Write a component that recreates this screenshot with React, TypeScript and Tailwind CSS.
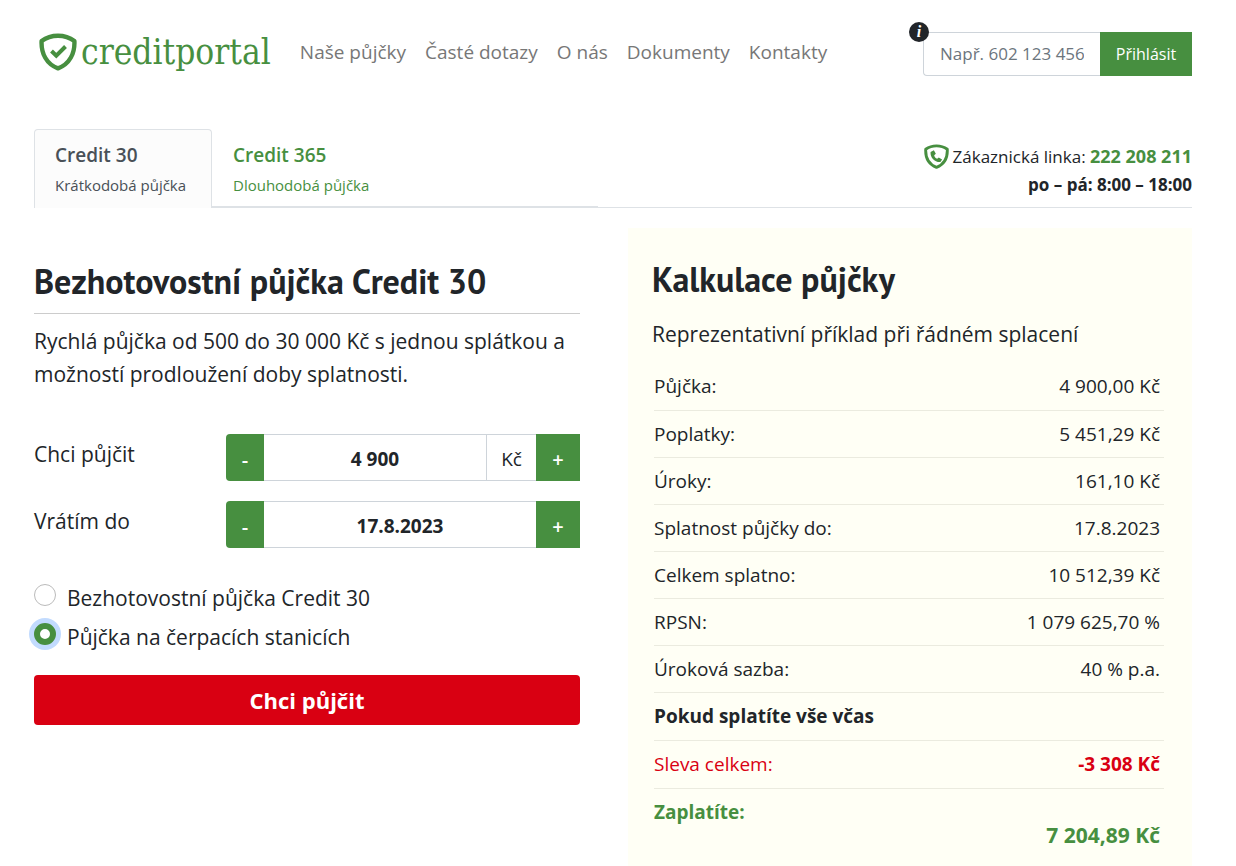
import React, { useState } from 'react';

interface CalcRow {
  label: string;
  value: string;
}

const navItems = ['Naše půjčky', 'Časté dotazy', 'O nás', 'Dokumenty', 'Kontakty'];

const rows: CalcRow[] = [
  { label: 'Půjčka:', value: '4 900,00 Kč' },
  { label: 'Poplatky:', value: '5 451,29 Kč' },
  { label: 'Úroky:', value: '161,10 Kč' },
  { label: 'Splatnost půjčky do:', value: '17.8.2023' },
  { label: 'Celkem splatno:', value: '10 512,39 Kč' },
  { label: 'RPSN:', value: '1 079 625,70 %' },
  { label: 'Úroková sazba:', value: '40 % p.a.' },
];

const loanTypes = ['Bezhotovostní půjčka Credit 30', 'Půjčka na čerpacích stanicích'];

const Shield: React.FC<{ className: string; children: React.ReactNode }> = ({ className, children }) => (
  <svg viewBox="0 0 38 38" className={className} fill="none" stroke="#478f40" aria-hidden="true">
    <path
      d="M19 2.8C13 2.8 7.5 4.4 2.6 8C2 20.5 7.5 31 19 35.4C30.5 31 36 20.5 35.4 8C30.5 4.4 25 2.8 19 2.8Z"
      strokeWidth="4.4"
      strokeLinejoin="round"
    />
    {children}
  </svg>
);

const Header: React.FC = () => (
  <header className="flex items-start">
    <a href="#" className="flex items-center gap-1 pl-[5px] text-[#478f40]">
      <Shield className="h-[38px] w-[38px]">
        <path d="M12.5 18L17.3 22.7L26.5 13.5" strokeWidth="4" />
      </Shield>
      <span className="font-['DejaVu_Serif_Condensed','DejaVu_Serif',serif] text-[35px] leading-10">creditportal</span>
    </a>
    <nav className="ml-[29px] flex gap-[19px] pt-1 text-[19px] leading-8 text-[#777]">
      {navItems.map((item) => (
        <a key={item} href="#">
          {item}
        </a>
      ))}
    </nav>
    <form className="relative ml-auto flex h-11">
      <input
        type="tel"
        aria-label="Telefon"
        placeholder="Např. 602 123 456"
        className="w-[177px] rounded-l border border-r-0 border-[#ced4da] px-4 text-[17px] placeholder:text-[#6c757d]"
      />
      <button type="button" className="w-[92px] bg-[#478f40] text-base text-white">
        Přihlásit
      </button>
      <span className="absolute -left-3.5 -top-2.5 flex h-5 w-5 items-center justify-center rounded-full bg-[#212529] font-['Liberation_Serif',serif] text-base font-bold italic leading-none text-white">
        i
      </span>
    </form>
  </header>
);

const TabBar: React.FC = () => (
  <div className="mt-[53px] flex border-b border-[#dee2e6]">
    <div className="flex w-[calc(50%-15px)]">
      <a href="#" className="-mb-px w-[178px] rounded-t border border-b-0 border-[#dee2e6] bg-[#fcfcfc] px-5 pt-[9px] text-[#495057]">
        <div className="text-[19px] font-semibold leading-8">Credit 30</div>
        <div className="whitespace-nowrap text-[15px] leading-7">Krátkodobá půjčka</div>
      </a>
      <a href="#" className="flex-1 border-b border-[#dee2e6] px-[21px] pt-2.5 text-[#478f40]">
        <div className="text-[19px] font-semibold leading-8">Credit 365</div>
        <div className="text-[15px] leading-7">Dlouhodobá půjčka</div>
      </a>
    </div>
    <div className="ml-auto pb-2 pt-[13px] text-right text-[17px] leading-7">
      <div className="flex items-center justify-end gap-1">
        <Shield className="h-[25px] w-[25px]">
          <path
            d="M10 12C9 20 16 28 25 27.5L27.5 23.5L22.5 20.5L20 22.5C17.5 21.5 16 19.5 15.5 17L18 15L15 9.5Z"
            fill="#478f40"
            stroke="none"
          />
        </Shield>
        <span>
          Zákaznická linka:{' '}
          <a href="tel:222208211" className="text-lg font-bold leading-7 text-[#478f40]">
            222 208 211
          </a>
        </span>
      </div>
      <div className="font-bold">po – pá: 8:00 – 18:00</div>
    </div>
  </div>
);

interface StepperProps {
  id: string;
  label: string;
  value: string;
  unit?: string;
}

const Stepper: React.FC<StepperProps> = ({ id, label, value, unit }) => {
  const [text, setText] = useState(value);

  return (
    <div className="mb-5 flex">
      <label htmlFor={id} className="w-48 shrink-0 pt-1 text-[21px] leading-8">
        {label}
      </label>
      <div className="flex h-[47px] min-w-0 flex-1">
        <button type="button" aria-label="Snížit" className="w-[38px] shrink-0 rounded-l bg-[#478f40] pt-1 text-xl font-semibold text-white">
          -
        </button>
        <input
          id={id}
          value={text}
          onChange={(e) => setText(e.target.value)}
          className="min-w-0 flex-1 border-y border-[#ced4da] pt-1 text-center text-[19px] font-bold"
        />
        {unit && (
          <span className="flex w-[50px] items-center justify-center border border-r-0 border-[#ced4da] pt-1 text-[19px]">
            {unit}
          </span>
        )}
        <button type="button" aria-label="Zvýšit" className="w-11 shrink-0 bg-[#478f40] pt-1 text-xl font-semibold text-white">
          +
        </button>
      </div>
    </div>
  );
};

const LoanForm: React.FC = () => {
  const [loanType, setLoanType] = useState(1);

  return (
    <section className="min-w-0 pt-[29px]">
      <h1 className="border-b border-[#ccc] pb-2 font-['PT_Sans','Noto_Sans',sans-serif] text-[34px] font-bold leading-[48px]">
        Bezhotovostní půjčka Credit 30
      </h1>
      <p className="pt-[11px] text-[21px] leading-[33px]">
        Rychlá půjčka od 500 do 30 000 Kč s jednou splátkou a možností prodloužení doby splatnosti.
      </p>
      <form className="pt-[43px]">
        <Stepper id="amount" label="Chci půjčit" value="4 900" unit="Kč" />
        <Stepper id="due" label="Vrátím do" value="17.8.2023" />
        <div className="pt-3">
          {loanTypes.map((type, i) => (
            <label key={type} className="flex h-[39px] items-start text-[21px] leading-9">
              <input
                type="radio"
                name="loan"
                checked={loanType === i}
                onChange={() => setLoanType(i)}
                className="mr-[11px] mt-1 h-[22px] w-[22px] appearance-none rounded-full border border-[#bbb] bg-white checked:border-[6px] checked:border-[#478f40] checked:ring-[5px] checked:ring-[#c2dbfe]"
              />
              {type}
            </label>
          ))}
        </div>
        <button type="button" className="mt-[17px] h-[50px] w-full rounded bg-[#d90012] text-[22px] font-bold text-white">
          Chci půjčit
        </button>
      </form>
    </section>
  );
};

const Calculation: React.FC = () => (
  <section className="min-w-0 bg-[#fffff5] px-6 pb-8 pt-[27px]">
    <h2 className="font-['PT_Sans','Noto_Sans',sans-serif] text-[34px] font-bold leading-[48px]">Kalkulace půjčky</h2>
    <p className="pb-[13px] pt-[15px] text-[21px] leading-8">Reprezentativní příklad při řádném splacení</p>
    <table className="mx-0.5 w-[calc(100%-6px)] text-[19px] leading-7">
      <tbody>
        {rows.map((row) => (
          <tr key={row.label} className="h-[47px] border-b border-[#ebebdf]">
            <th className="text-left font-normal">{row.label}</th>
            <td className="pr-1 text-right">{row.value}</td>
          </tr>
        ))}
        <tr className="h-12 border-b border-[#ebebdf]">
          <th colSpan={2} className="text-left font-bold">
            Pokud splatíte vše včas
          </th>
        </tr>
        <tr className="h-12 border-b border-[#ebebdf] text-[#d90012]">
          <th className="text-left font-normal">Sleva celkem:</th>
          <td className="pr-1 text-right font-bold">-3 308 Kč</td>
        </tr>
        <tr className="align-top font-bold text-[#478f40]">
          <th className="pt-[9px] text-left">Zaplatíte:</th>
          <td className="pr-1 pt-8 text-right text-[21px]">7 204,89 Kč</td>
        </tr>
      </tbody>
    </table>
  </section>
);

const App: React.FC = () => {
  return (
    <div className="bg-white pl-[34px] pr-11 pt-8 font-['Open_Sans',sans-serif] text-[#212529]">
      <Header />
      <TabBar />
      <main className="mt-5 grid grid-cols-[546fr_564fr] gap-12">
        <LoanForm />
        <Calculation />
      </main>
    </div>
  );
};

export default App;
